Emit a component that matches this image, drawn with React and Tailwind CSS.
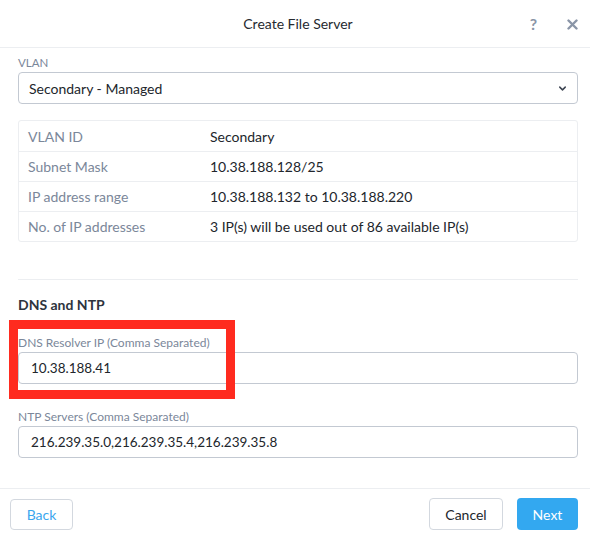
import { ChevronDown } from 'lucide-react';

const vlanRows = [
    { label: 'VLAN ID', value: 'Secondary' },
    { label: 'Subnet Mask', value: '10.38.188.128/25' },
    { label: 'IP address range', value: '10.38.188.132 to 10.38.188.220' },
    { label: 'No. of IP addresses', value: '3 IP(s) will be used out of 86 available IP(s)' },
];

function Field({ label, value }) {
    return (
        <div>
            <div className="h-[16px] mb-[1px] text-[12px] leading-[16px] text-[#7b879a]">{label}</div>
            <div className="h-[32px] flex items-center border border-[#c3c9d2] rounded-[4px] pl-[12px] text-[13.5px] text-[#22262c]">
                {value}
            </div>
        </div>
    );
}

export default function App() {
    return (
        <div className="relative w-[590px] h-[539px] bg-white font-['Lato','Open_Sans',sans-serif] overflow-hidden">
            {/* Header */}
            <div className="h-[48px] border-b border-[#eceef1] grid grid-cols-[1fr_auto_1fr] items-center">
                <div />
                <div className="text-[14px] text-[#262a30] pl-[6px]">Create File Server</div>
                <div className="flex justify-end items-center gap-[30px] pr-[12px]">
                    <span className="text-[16px] font-bold text-[#8a95a7]">?</span>
                    <svg width="11" height="11" viewBox="0 0 11 11" className="mt-[1px]">
                        <path d="M1.5 1.5 L9.5 9.5 M9.5 1.5 L1.5 9.5" stroke="#8a95a7" strokeWidth="2.4" strokeLinecap="round" />
                    </svg>
                </div>
            </div>

            {/* Body */}
            <div className="pl-[18px] pr-[12px] pt-[7px]">
                <div className="h-[16px] mb-[1px] text-[11.5px] leading-[16px] text-[#7b879a]">VLAN</div>
                <div className="h-[32px] flex items-center justify-between border border-[#c3c9d2] rounded-[4px] pl-[10px] pr-[9px] text-[14px] text-[#22262c]">
                    <span>Secondary - Managed</span>
                    <ChevronDown size={11} strokeWidth={3.2} color="#3b4250" />
                </div>

                <div className="mt-[16px] border border-[#eceef1] rounded-[3px]">
                    {vlanRows.map((r, i) => (
                        <div
                            key={r.label}
                            className={`h-[30px] flex items-center text-[14px] ${i > 0 ? 'border-t border-[#eceef1]' : ''}`}
                        >
                            <div className="w-[191px] pl-[9px] text-[#7b879a]">{r.label}</div>
                            <div className="text-[#22262c]">{r.value}</div>
                        </div>
                    ))}
                </div>

                <div className="mt-[37px] border-t border-[#eceef1]" />

                <div className="mt-[17px] text-[14px] leading-[16px] font-bold text-[#2e343d]">DNS and NTP</div>

                <div className="mt-[22px]">
                    <Field label="DNS Resolver IP (Comma Separated)" value="10.38.188.41" />
                </div>
                <div className="mt-[25px]">
                    <Field label="NTP Servers (Comma Separated)" value="216.239.35.0,216.239.35.4,216.239.35.8" />
                </div>
            </div>

            {/* Footer */}
            <div className="absolute left-0 right-0 bottom-0 h-[51px] border-t border-[#eceef1] flex items-center justify-between pl-[10px] pr-[12px]">
                <button className="h-[31px] w-[63px] border border-[#d3d8df] rounded-[4px] text-[14px] text-[#3aa6ee] bg-white">
                    Back
                </button>
                <div className="flex gap-[14px]">
                    <button className="h-[32px] w-[74px] border border-[#d3d8df] rounded-[4px] text-[14px] text-[#22262c] bg-white">
                        Cancel
                    </button>
                    <button className="h-[32px] w-[61px] rounded-[4px] text-[14px] text-white bg-[#33a8f0]">
                        Next
                    </button>
                </div>
            </div>

            {/* Annotation highlight */}
            <div className="absolute left-[9px] top-[320px] w-[226px] h-[79px] border-[9px] border-[#ff2b1f]" />
        </div>
    );
}
